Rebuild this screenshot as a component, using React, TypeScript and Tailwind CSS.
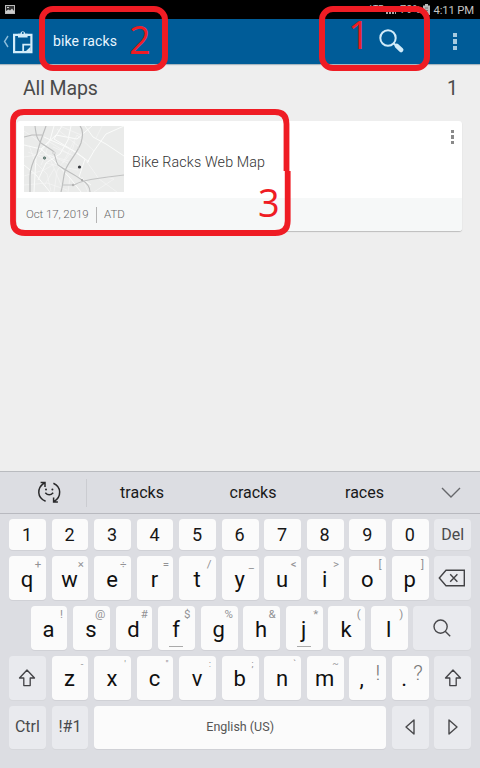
import React from 'react';

type Key = { main: string; alt?: string; underline?: boolean; big?: boolean; small?: boolean };

const digits = ['1', '2', '3', '4', '5', '6', '7', '8', '9', '0'];

const topRow: Key[] = [
  { main: 'q', alt: '+' }, { main: 'w', alt: '×' }, { main: 'e', alt: '÷' }, { main: 'r', alt: '=' },
  { main: 't', alt: '/' }, { main: 'y', alt: '_' }, { main: 'u', alt: '<' }, { main: 'i', alt: '>' },
  { main: 'o', alt: '[' }, { main: 'p', alt: ']' },
];

const homeRow: Key[] = [
  { main: 'a', alt: '!' }, { main: 's', alt: '@' }, { main: 'd', alt: '#' },
  { main: 'f', alt: '$', underline: true }, { main: 'g', alt: '%' }, { main: 'h', alt: '&' },
  { main: 'j', alt: '*', underline: true }, { main: 'k', alt: '(' }, { main: 'l', alt: ')' },
];

const bottomRow: Key[] = [
  { main: 'z', alt: '-', small: true }, { main: 'x', alt: "'", small: true }, { main: 'c', alt: '"', small: true },
  { main: 'v', alt: ':', small: true }, { main: 'b', alt: ';', small: true }, { main: 'n', alt: '`', small: true },
  { main: 'm', alt: '~', small: true }, { main: ',', alt: '!', big: true }, { main: '.', alt: '?', big: true },
];

function LetterKey({ k }: { k: Key }) {
  return (
    <div className="relative flex h-full w-[36.9px] shrink-0 items-center justify-center rounded-[4px] bg-[#fbfbfb] pt-[3px] text-[22px] leading-none text-[#101010] shadow-[0_1px_0_#d0d1d6]">
      <span className={k.big ? 'mr-[12px]' : 'mr-[1px]'}>{k.main}</span>
      {k.big && (
        <span className="absolute top-[7px] right-[6px] text-[21px] leading-none font-light text-[#777]">{k.alt}</span>
      )}
      {k.small && <span className="absolute top-[3px] right-[5px] text-[9.5px] leading-none text-[#929295]">{k.alt}</span>}
      {!k.big && !k.small && (
        <span className="absolute top-[3px] right-[4.5px] text-[11.5px] leading-none text-[#929295]">{k.alt}</span>
      )}
      {k.underline && <span className="absolute bottom-[3px] left-[11px] h-px w-[14px] bg-[#aaa]" />}
    </div>
  );
}

function FunctionKey({ className = 'w-[36.9px]', children }: { className?: string; children: React.ReactNode }) {
  return (
    <div className={`flex h-full shrink-0 items-center justify-center rounded-[4px] bg-[#e9eaee] text-[#4a4a4c] shadow-[0_1px_0_#d6d7db] ${className}`}>
      {children}
    </div>
  );
}

function ShiftIcon() {
  return (
    <svg width="18" height="18" viewBox="0 0 18 18" fill="none" stroke="#424245" strokeWidth="1.3" strokeLinejoin="round">
      <path d="M9 1 16.5 9H12.2V16.6H5.8V9H1.5Z" />
    </svg>
  );
}

function MapThumb() {
  return (
    <svg className="block h-[66px] w-[100px] shrink-0" viewBox="0 0 100 66" fill="none">
      <rect width="100" height="66" fill="#eaebea" />
      <path d="M38 0 30 13 45 22 61 33 55 51 67 59M30 0 26 14 12 31 10 66M47 0 44 14 36 28 22 37 14 54M0 19 17 23 32 37 46 52 57 66M0 39 12 49 26 66M20 11 40 20 52 26 65 36M17 23 32 9 53 13 68 0M61 0 69 11 82 18 100 30M100 0 82 8 70 25 63 37" stroke="#fafbfa" strokeWidth="1" />
      <path d="M30 66 33 45 42 31 53 9M53 9 70 25M61 33 75 53 93 66M70 66 90 53 82 51M0 50 20 44 32 37M4 26 27 35 38 61M78 0 72 12M0 5 22 20M0 31 20 28 45 35M22 37 38 41 54 44M33 3 54 20M24 15 45 28M39 37 48 25 51 15M0 59 23 57 43 64M5 19 11 36 23 48 27 65M46 52 44 66M58 51 64 66M20 60 30 43M26 13 21 30 17 39M36 0 57 9M29 21 50 30M25 29 46 38" stroke="#f6f7f6" strokeWidth=".6" />
      <path d="M22 0C19 9 15 18 13 28C8 37 6 44 6 51V66" stroke="#bdbebe" strokeWidth="1.2" />
      <path d="M0 11 8 9 18 9M11 0C12 7 12 12 17 17L29 25C32 30 31 34 34 39C42 45 50 48 58 54C63 57 66 60 66 66" stroke="#bdbebe" strokeWidth="1.1" />
      <path d="M56 0C60 4 59 10 57 17C53 28 44 36 41 45C39 52 39 59 37 66" stroke="#bdbebe" strokeWidth="1.2" />
      <path d="M38 59H50C60 53 73 53 84 51L100 49" stroke="#c2c3c3" strokeWidth="1.1" />
      <circle cx="30" cy="27" r="1.3" fill="#ededed" stroke="#b8b8b8" strokeWidth=".5" />
      <circle cx="54" cy="22" r=".8" fill="#ddd" />
      <circle cx="49" cy="59" r="1.2" fill="#b4b4b4" />
      <circle cx="58" cy="54" r="1" fill="#a4a4a4" />
      <circle cx="20.5" cy="32" r="1.2" fill="#829991" stroke="#49635b" strokeWidth=".7" />
      <circle cx="55.5" cy="41" r="1.6" fill="#35383d" />
    </svg>
  );
}

function StatusBar() {
  return (
    <div className="flex h-[19px] items-center justify-between bg-black pr-[6px] pl-[5px] text-[#c4c4c4]">
      <svg width="10" height="9" viewBox="0 0 10 9">
        <rect x=".5" y=".5" width="9" height="8" fill="#333" stroke="#bbb" />
        <path d="M1 8V6L3.5 4.4 5 5.5 7 3.5 9 6V8Z" fill="#ccc" />
        <rect x="2" y="2" width="2" height="1" fill="#ccc" />
      </svg>
      <div className="flex items-center">
        <span className="mr-[3px] text-[9px] leading-none tracking-tight">LTE</span>
        <svg className="mr-[4px]" width="10" height="9" viewBox="0 0 10 9"><path d="M0 9V7H2V9M3 9V5H5V9M6 9V3H8V9M9 9V1H10V9" fill="#aaa" /></svg>
        <span className="mr-[3px] text-[11px] leading-none">79%</span>
        <svg className="mr-[3px]" width="7" height="11" viewBox="0 0 7 11">
          <path d="M2 0H5V1.5H7V11H0V1.5H2Z" fill="#b9b9b9" />
          <path d="M2 4H5M2 6.5H5" stroke="#777" />
        </svg>
        <span className="mt-[2px] text-[11.3px] leading-none tracking-[-0.15px]">4:11 PM</span>
      </div>
    </div>
  );
}

export default function App() {
  return (
    <div className="relative flex h-[768px] w-[480px] flex-col overflow-hidden bg-[#eeeeee] font-[Roboto,'Liberation_Sans',sans-serif]">
      <StatusBar />

      <header className="flex h-[45px] shrink-0 items-center bg-[#005c98] shadow-[0_1px_1px_#a9b7c0]">
        <svg className="ml-[3px]" width="6" height="13" viewBox="0 0 6 13" fill="none" stroke="#8bbcda" strokeWidth="1.4"><path d="M5 1 1.5 6.5 5 12" /></svg>
        <svg className="ml-[3px]" width="22" height="24" viewBox="0 0 22 24" fill="none" stroke="#d3ecf9">
          <path d="M2.1 4.8H19.4V22.2H2.1Z" strokeWidth="2.2" />
          <path d="M6 7.4V3.7H8.4Q8.4 1.2 10.8 1.2T13.2 3.7H15.6V7.4Z" fill="#d3ecf9" stroke="none" />
          <circle cx="10.8" cy="3.1" r="1" fill="#005c98" stroke="none" />
          <path d="M11.2 22V14.7H18.8" strokeWidth="1.8" />
          <path d="M12.5 21.2V16H18L12.5 21.2Z" fill="#005c98" stroke="none" />
          <path d="M13.5 21.5 18.5 16.8V21.5Z" fill="#d3ecf9" stroke="none" />
        </svg>
        <span className="ml-[19px] text-[14px] tracking-[0.12px] text-[#e9f6ff]">bike racks</span>
        <svg className="ml-auto" width="27" height="25" viewBox="0 0 27 25" fill="none" stroke="#d1ebf9">
          <circle cx="9" cy="9" r="7.7" strokeWidth="2" />
          <path d="M14.6 14.3 17.5 17" strokeWidth="2" />
          <path d="M17.8 16.8 22.2 21" strokeWidth="4.5" strokeLinecap="round" />
        </svg>
        <div className="mr-[23px] ml-[47px] flex flex-col gap-[2px]">
          <i className="size-[4.5px] bg-[#a7cbe0]" /><i className="size-[4.5px] bg-[#a7cbe0]" /><i className="size-[4.5px] bg-[#a7cbe0]" />
        </div>
      </header>

      <main className="flex-1 pr-[18px] pl-[17px]">
        <div className="flex h-[57px] items-center justify-between pr-[4px] pb-[8px] pl-[6px] text-[#4a4a4a]">
          <h1 className="text-[19.5px] tracking-[-0.12px]">All Maps</h1>
          <span className="text-[19.5px]">1</span>
        </div>
        <article className="h-[110px] overflow-hidden rounded-[3px] bg-white shadow-[0_1px_1px_#bcbcbc]">
          <div className="flex h-[77px] pt-[5px] pl-[7px]">
            <MapThumb />
            <h2 className="mt-[27px] ml-[8px] text-[14.3px] leading-[18px] font-light tracking-[0.12px] text-[#333]">Bike Racks Web Map</h2>
            <div className="mt-[4px] mr-[8px] ml-auto flex flex-col gap-[2px]">
              <i className="size-[3.4px] bg-[#898989]" /><i className="size-[3.4px] bg-[#898989]" /><i className="size-[3.4px] bg-[#898989]" />
            </div>
          </div>
          <div className="flex h-[33px] items-center bg-[#f6f8f8] pl-[9px] text-[11.5px] font-light text-[#666]">
            <span className="w-[63px] tracking-[-0.08px] whitespace-nowrap">Oct 17, 2019</span>
            <i className="mr-[7px] ml-[7px] h-[16px] w-px bg-[#b5b5b5]" />
            <span>ATD</span>
          </div>
        </article>
      </main>

      <section className="flex h-[297px] shrink-0 flex-col bg-[#dcdde2]">
        <div className="flex h-[43px] shrink-0 items-center border-t border-b border-t-[#b9bbbf] border-b-[#b8b9bf] text-[16px] text-[#191919]">
          <div className="flex h-[28px] w-[87px] items-center border-r border-[#cbccd1] pl-[37px]">
            <svg width="25" height="25" viewBox="0 0 25 25" fill="none" stroke="#29292b" strokeWidth="1.5">
              <path d="M8.6 21.2C-.2 17.5-.2 8.2 7 3.2M3.6 2.4H8V7M16.4 3.2C24.6 7 24.6 16.6 17.2 21.4M20.9 22H16.6V17.6" />
              <path d="M8.3 12.7Q12.2 17 16.2 12.7" />
              <circle cx="9" cy="9.4" r="1" fill="#29292b" stroke="none" /><circle cx="15.4" cy="9.4" r="1" fill="#29292b" stroke="none" />
            </svg>
          </div>
          <span className="w-[110px] text-center">tracks</span>
          <span className="w-[112px] text-center">cracks</span>
          <span className="w-[111px] text-center">races</span>
          <svg className="ml-[21px]" width="20" height="12" viewBox="0 0 20 12" fill="none" stroke="#66676b" strokeWidth="1.4"><path d="M1 1 10 10 19 1" /></svg>
        </div>

        <div className="flex flex-col gap-[6px] pt-[5px] pl-[9px]">
          <div className="flex h-[31px] gap-[5.65px]">
            {digits.map((d) => (
              <div key={d} className="flex h-full w-[36.9px] shrink-0 items-center justify-center rounded-[4px] bg-[#fbfbfb] pr-[1px] text-[18px] leading-none text-[#171717] shadow-[0_1px_0_#d0d1d6]">{d}</div>
            ))}
            <FunctionKey><span className="text-[16px]">Del</span></FunctionKey>
          </div>
          <div className="flex h-[44px] gap-[5.65px]">
            {topRow.map((k) => <LetterKey key={k.main} k={k} />)}
            <FunctionKey>
              <svg className="mr-[2px]" width="28" height="18" viewBox="0 0 28 18" fill="none" stroke="#424245" strokeWidth="1.4">
                <path d="M8 1.2H26.3V16.8H8L1.3 9ZM12.2 5.3 19.4 12.7M19.4 5.3 12.2 12.7" />
              </svg>
            </FunctionKey>
          </div>
          <div className="flex h-[44px] gap-[5.65px] pl-[21.5px]">
            {homeRow.map((k) => <LetterKey key={k.main} k={k} />)}
            <FunctionKey className="w-[57.5px]">
              <svg width="18" height="18" viewBox="0 0 18 18" fill="none" stroke="#48484b" strokeWidth="1.4">
                <circle cx="7.6" cy="7.6" r="6.6" /><path d="M12.2 12.2 17.2 17.2" />
              </svg>
            </FunctionKey>
          </div>
          <div className="flex h-[43.5px] gap-[5.65px]">
            <FunctionKey><ShiftIcon /></FunctionKey>
            {bottomRow.map((k) => <LetterKey key={k.main} k={k} />)}
            <FunctionKey><ShiftIcon /></FunctionKey>
          </div>
          <div className="flex h-[43.5px] gap-[5.65px]">
            <FunctionKey><span className="text-[16px]">Ctrl</span></FunctionKey>
            <FunctionKey><span className="text-[16px]">!#1</span></FunctionKey>
            <div className="flex w-[292.2px] items-center justify-center rounded-[4px] bg-[#fbfbfb] text-[12.5px] text-[#555] shadow-[0_1px_0_#d0d1d6]">English (US)</div>
            <FunctionKey><svg width="10" height="16" viewBox="0 0 10 16" fill="none" stroke="#48484b" strokeWidth="1.4" strokeLinejoin="round"><path d="M9 1V15L1 8Z" /></svg></FunctionKey>
            <FunctionKey><svg width="10" height="16" viewBox="0 0 10 16" fill="none" stroke="#48484b" strokeWidth="1.4" strokeLinejoin="round"><path d="M1 1V15L9 8Z" /></svg></FunctionKey>
          </div>
        </div>
      </section>

      {/* Red tutorial callouts drawn over the app */}
      <div className="pointer-events-none absolute inset-0 font-['Open_Sans','Noto_Sans',sans-serif] text-[38px] leading-[38px] text-[#ef1c24]">
        <svg className="absolute inset-0" width="480" height="768" viewBox="0 0 480 768" fill="none" stroke="#ef1c24">
          <rect x="42" y="9" width="123" height="59" rx="11" strokeWidth="6" />
          <rect x="322" y="9" width="105" height="59" rx="11" strokeWidth="6" />
          <path d="M286.5 171V124Q286.5 112 275 112H24Q13 112 13 123V221Q13 233 25 233H275Q287.7 233 287.7 221V171" strokeWidth="5.8" />
        </svg>
        <span className="absolute top-[15px] left-[348px]">1</span>
        <span className="absolute top-[20px] left-[129px]">2</span>
        <span className="absolute top-[183px] left-[258px]">3</span>
      </div>
    </div>
  );
}
